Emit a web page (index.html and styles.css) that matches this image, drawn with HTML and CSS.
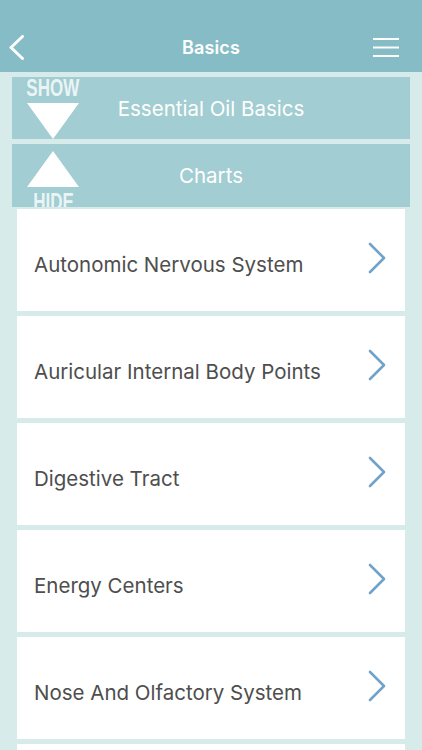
FILE: index.html
```html
<!DOCTYPE html>
<html lang="en">
<head>
<meta charset="utf-8">
<meta name="viewport" content="width=device-width, initial-scale=1">
<title>Basics</title>
<link rel="stylesheet" href="styles.css">
</head>
<body>
<header class="nav">
  <div class="nav-row">
    <button class="nav-back" aria-label="Back">
      <svg width="16" height="25" viewBox="0 0 16 25"><polyline points="13.5,1.5 2,12.5 13.5,23.5" fill="none" stroke="#fff" stroke-width="3" stroke-linecap="round" stroke-linejoin="round"/></svg>
    </button>
    <h1 class="nav-title">Basics</h1>
    <button class="nav-menu" aria-label="Menu">
      <svg width="26" height="20" viewBox="0 0 26 20"><g stroke="#fff" stroke-width="2"><line x1="0" y1="1" x2="26" y2="1"/><line x1="0" y1="9.5" x2="26" y2="9.5"/><line x1="0" y1="18" x2="26" y2="18"/></g></svg>
    </button>
  </div>
</header>
<main class="content">
  <div class="section section-closed">
    <div class="toggle toggle-show">
      <span class="toggle-label">SHOW</span>
      <span class="tri tri-down"></span>
    </div>
    <span class="section-title">Essential Oil Basics</span>
  </div>
  <div class="section section-open">
    <div class="toggle toggle-hide">
      <span class="tri tri-up"></span>
      <span class="toggle-label">HIDE</span>
    </div>
    <span class="section-title">Charts</span>
  </div>
  <ul class="list">
    <li class="card"><span class="card-text">Autonomic Nervous System</span><svg class="chev" width="18" height="32" viewBox="0 0 18 32"><polyline points="2,2 16,16 2,30" fill="none" stroke="#71a3c9" stroke-width="2.6" stroke-linecap="round" stroke-linejoin="round"/></svg></li>
    <li class="card"><span class="card-text">Auricular Internal Body Points</span><svg class="chev" width="18" height="32" viewBox="0 0 18 32"><polyline points="2,2 16,16 2,30" fill="none" stroke="#71a3c9" stroke-width="2.6" stroke-linecap="round" stroke-linejoin="round"/></svg></li>
    <li class="card"><span class="card-text">Digestive Tract</span><svg class="chev" width="18" height="32" viewBox="0 0 18 32"><polyline points="2,2 16,16 2,30" fill="none" stroke="#71a3c9" stroke-width="2.6" stroke-linecap="round" stroke-linejoin="round"/></svg></li>
    <li class="card"><span class="card-text">Energy Centers</span><svg class="chev" width="18" height="32" viewBox="0 0 18 32"><polyline points="2,2 16,16 2,30" fill="none" stroke="#71a3c9" stroke-width="2.6" stroke-linecap="round" stroke-linejoin="round"/></svg></li>
    <li class="card"><span class="card-text">Nose And Olfactory System</span><svg class="chev" width="18" height="32" viewBox="0 0 18 32"><polyline points="2,2 16,16 2,30" fill="none" stroke="#71a3c9" stroke-width="2.6" stroke-linecap="round" stroke-linejoin="round"/></svg></li>
    <li class="card"><span class="card-text">Respiratory System</span><svg class="chev" width="18" height="32" viewBox="0 0 18 32"><polyline points="2,2 16,16 2,30" fill="none" stroke="#71a3c9" stroke-width="2.6" stroke-linecap="round" stroke-linejoin="round"/></svg></li>
  </ul>
</main>
</body>
</html>
```
FILE: styles.css
```css
* { box-sizing: border-box; }
html, body {
  margin: 0;
  padding: 0;
  background: #d7ebeb;
  font-family: Inter, "Liberation Sans", Arial, sans-serif;
  overflow: hidden;
}
.nav {
  height: 72px;
  background: #86bcc5;
  padding-top: 24px;
}
.nav-row {
  height: 47px;
  display: grid;
  grid-template-columns: 1fr auto 1fr;
  align-items: center;
}
.nav-back, .nav-menu {
  background: none;
  border: 0;
  padding: 0;
  display: flex;
  align-items: center;
}
.nav-back { justify-self: start; margin-left: 9px; }
.nav-menu { justify-self: end; margin-right: 23px; }
.nav-back svg, .nav-menu svg { display: block; }
.nav-title {
  margin: 0;
  color: #fff;
  font-size: 18px;
  font-weight: 600;
  letter-spacing: 0.1px;
}
.content {
  padding-top: 5px;
}
.section {
  margin: 0 12px 5px;
  background: #a2cdd2;
  display: grid;
  grid-template-rows: 100%;
  grid-template-columns: 100%;
  align-items: center;
  overflow: hidden;
}
.section > * { grid-area: 1 / 1; }
.section-closed { height: 62px; }
.section-open { height: 63px; margin-bottom: 2px; }
.section-title {
  justify-self: center;
  color: #fff;
  font-size: 20.5px;
  font-weight: 400;
}
.toggle {
  justify-self: start;
  align-self: start;
  width: 54px;
  margin-left: 14px;
  display: flex;
  flex-direction: column;
  align-items: center;
}
.toggle-label {
  display: block;
  font-family: "Liberation Sans", Arial, sans-serif;
  font-weight: 700;
  font-size: 23px;
  line-height: 23px;
  color: rgba(255, 255, 255, 0.8);
  transform: scaleX(0.74);
  white-space: nowrap;
}
.tri {
  display: block;
  width: 0;
  height: 0;
  border-left: 26.5px solid transparent;
  border-right: 26.5px solid transparent;
}
.tri-down {
  margin-top: 3px;
  border-top: 36px solid #fff;
}
.tri-up {
  margin-top: 7px;
  border-bottom: 36px solid #fff;
  margin-bottom: 4px;
}
.list {
  list-style: none;
  margin: 0;
  padding: 0 17px;
  display: flex;
  flex-direction: column;
  gap: 5px;
}
.card {
  height: 102px;
  background: #fff;
  display: flex;
  align-items: center;
  justify-content: space-between;
  padding: 0 19px 0 17px;
}
.card-text {
  color: #4e4e4e;
  font-size: 20.5px;
  line-height: 24px;
  padding-top: 9px;
}
.chev { display: block; flex: none; margin-top: -4px; }
```
